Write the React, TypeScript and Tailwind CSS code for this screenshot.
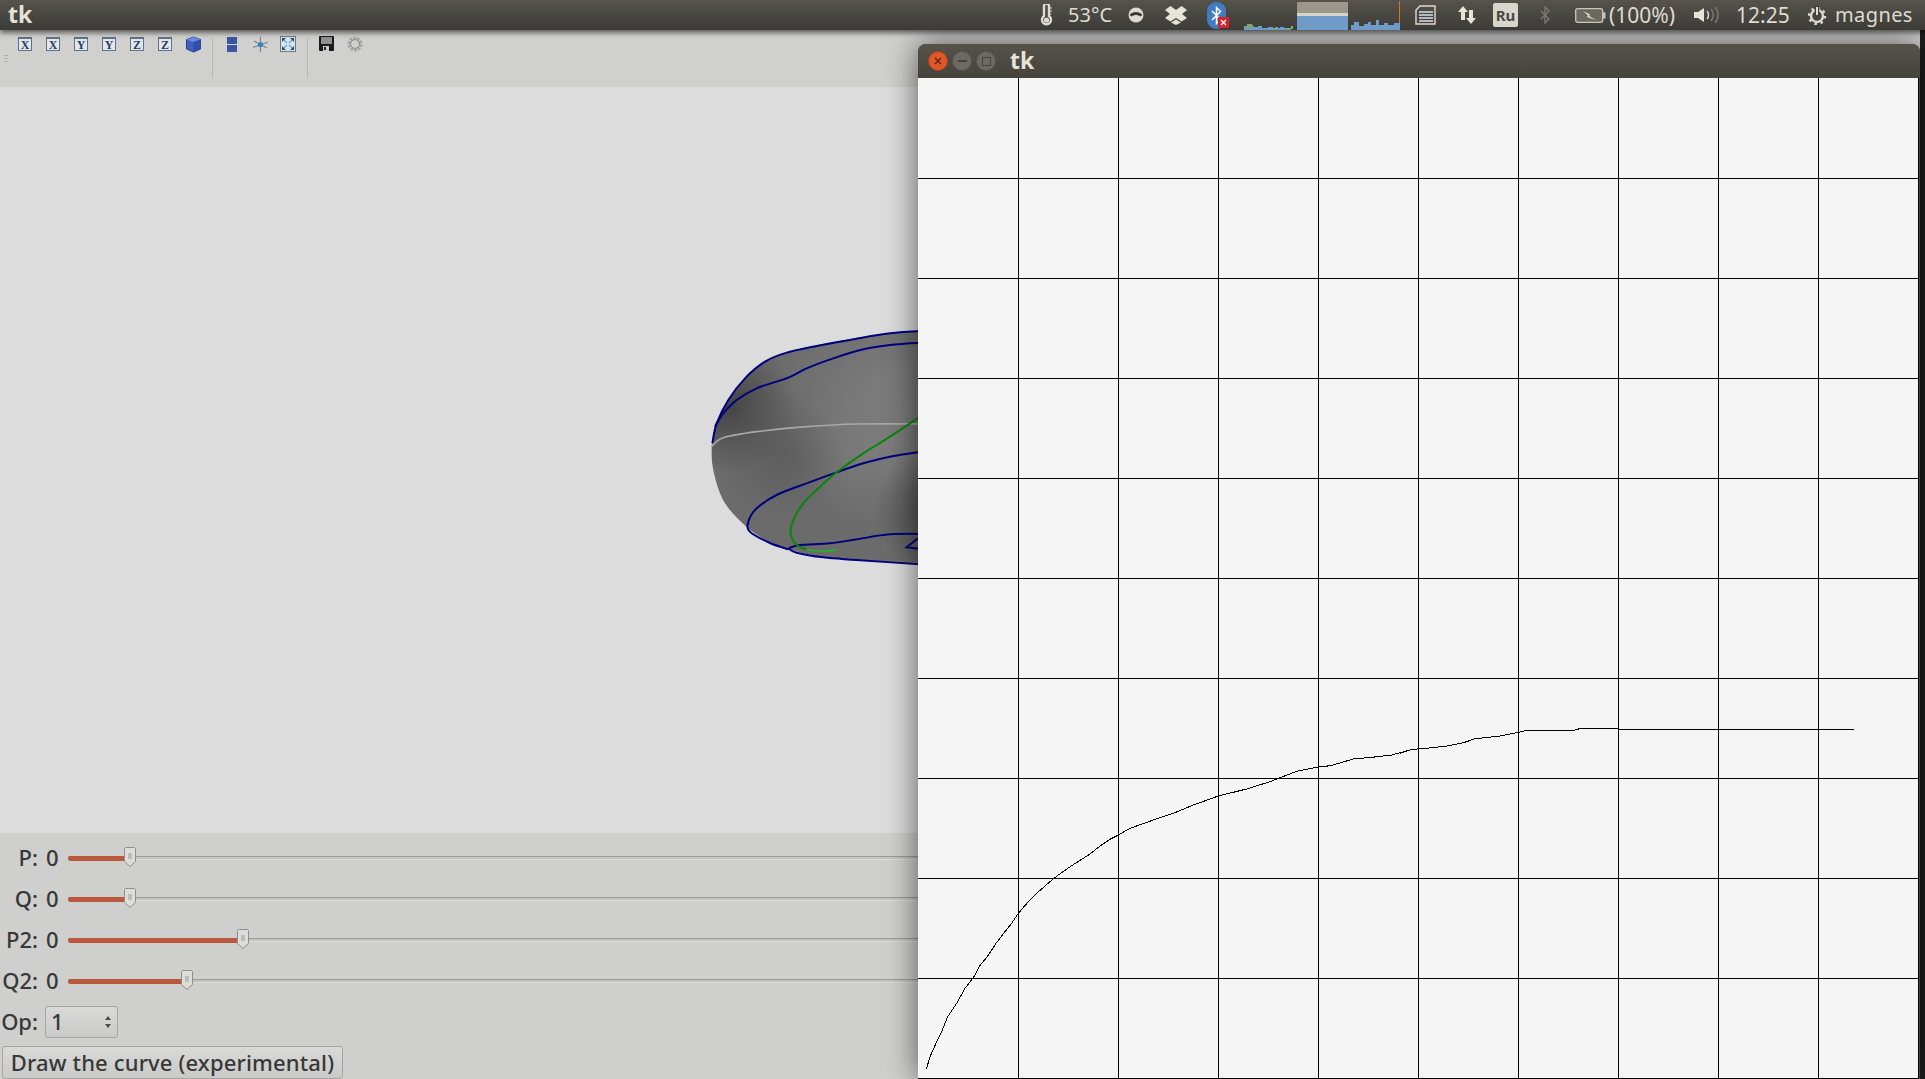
import React from 'react';

const uiFont = "font-['Noto_Sans',sans-serif]";

// curve traced off the canvas, in canvas pixels
const curveLeft = [
  [49, 1108], [60, 1070], [78, 1030], [97, 990], [113, 950], [140, 910], [165, 865], [192, 830],
  [207, 800], [232, 770], [258, 730], [281, 700], [305, 670], [325, 640], [355, 605], [380, 580],
  [420, 545], [445, 525], [485, 497], [540, 462], [570, 438], [600, 418], [625, 405], [660, 385],
  [730, 360], [790, 340], [850, 315], [925, 288], [1010, 267], [1080, 245], [1160, 214], [1225, 201],
  [1262, 197], [1330, 177], [1385, 172], [1445, 165], [1500, 150],
].map(([x, y]) => [x / 3 - 8, y / 3 + 622]);
const curveRight = [
  [0, 190], [35, 178], [70, 176], [140, 168], [190, 158], [225, 146], [300, 138], [353, 127],
  [380, 121], [520, 121], [540, 115], [648, 115], [652, 118], [1355, 118],
].map(([x, y]) => [x / 2.987 + 482, y / 3 + 612]);
const curve = [...curveLeft, ...curveRight].map((p) => p.join(',')).join(' ');

const gridX = [100, 200, 300, 400, 500, 600, 700, 800, 900];
const gridY = [100, 200, 300, 400, 500, 600, 700, 800, 900, 1000];

const sliders = [
  { label: 'P:', at: 62 },
  { label: 'Q:', at: 62 },
  { label: 'P2:', at: 175 },
  { label: 'Q2:', at: 119 },
];

// catmull-rom through the traced points so the torus doesn't look faceted
function smooth(pts: number[][]) {
  let d = `M${pts[0][0]} ${pts[0][1]}`;
  for (let i = 0; i < pts.length - 1; i++) {
    const p0 = pts[i - 1] || pts[i];
    const p1 = pts[i];
    const p2 = pts[i + 1];
    const p3 = pts[i + 2] || p2;
    const c1 = [p1[0] + (p2[0] - p0[0]) / 6, p1[1] + (p2[1] - p0[1]) / 6];
    const c2 = [p2[0] - (p3[0] - p1[0]) / 6, p2[1] - (p3[1] - p1[1]) / 6];
    d += `C${c1[0]} ${c1[1]} ${c2[0]} ${c2[1]} ${p2[0]} ${p2[1]}`;
  }
  return d;
}

const outline = smooth([
  [720, 62], [600, 70], [480, 88], [380, 106], [290, 128], [225, 155], [165, 205], [115, 270], [80, 340], [65, 410],
  [72, 490], [105, 580], [175, 655], [240, 697], [295, 718], [400, 742], [500, 750], [720, 765],
]);
const blueLines = [
  smooth([[720, 62], [600, 70], [480, 90], [380, 108], [290, 128], [225, 155], [165, 205], [115, 270], [80, 340], [67, 400]]),
  smooth([[720, 96], [600, 105], [520, 118], [430, 145], [350, 175], [295, 203], [200, 235], [140, 270], [100, 310], [75, 350]]),
  smooth([[720, 422], [600, 440], [520, 460], [440, 487], [350, 520], [260, 555], [200, 595], [175, 635], [180, 665], [240, 699], [295, 718]]),
  smooth([[720, 672], [600, 673], [500, 688], [420, 700], [330, 705], [295, 715]]),
  smooth([[295, 715], [320, 728], [400, 742], [500, 750], [720, 765]]),
];
const grayLine = smooth([[64, 410], [100, 383], [200, 365], [350, 350], [500, 342], [720, 342]]);
const greenLine = smooth([[720, 300], [600, 380], [520, 430], [440, 487], [380, 540], [340, 580], [310, 630], [302, 670], [320, 705], [350, 718]]);

function AxisIcon({ letter, className = '' }: { letter: string; className?: string }) {
  return (
    <div className={`w-[14px] h-[14px] border border-[#5f7186] border-t-[2px] bg-[#e4e7e8] flex items-center justify-center ${className}`}>
      <span className="font-['Liberation_Serif',serif] font-bold text-[12px] leading-none text-[#24406f]">{letter}</span>
    </div>
  );
}

function Toolbar() {
  return (
    <div className="relative h-[57px] bg-[#d0d0ce] flex items-start pt-[7px] shrink-0">
      <div className="absolute left-[4px] top-[25px] w-[4px] h-[7px] border-y border-[#b0b0ae]">
        <div className="h-px mt-[2px] bg-[#b0b0ae]" />
      </div>
      <AxisIcon letter="X" className="ml-[18px]" />
      <AxisIcon letter="X" className="ml-[14px]" />
      <AxisIcon letter="Y" className="ml-[14px]" />
      <AxisIcon letter="Y" className="ml-[14px]" />
      <AxisIcon letter="Z" className="ml-[14px]" />
      <AxisIcon letter="Z" className="ml-[14px]" />
      <svg className="ml-[13px] -mt-[1px]" width="17" height="17" viewBox="0 0 17 17">
        <path d="M8.5 1 15.5 3.5V13L8.5 16 1.5 13V3.5Z" fill="#3f5fc0" stroke="#27407f" />
        <path d="M1.5 3.5 8.5 6 15.5 3.5 8.5 1Z" fill="#6d8be0" />
        <path d="M8.5 6V16L15.5 13V3.5Z" fill="#3050a8" />
      </svg>
      <div className="ml-[10px] w-px h-[41px] bg-[#b8b8b6]" />
      <div className="ml-[14px] w-[10px] flex flex-col gap-[1px]">
        <div className="h-[7px] bg-[#3b55a0]" />
        <div className="h-[7px] bg-[#3b55a0]" />
      </div>
      <svg className="ml-[16px]" width="15" height="15" viewBox="0 0 15 15">
        <path d="M7.5 0V15M0 10.5 15 5M1 4 14 11" stroke="#85868a" strokeWidth="1.3" />
        <circle cx="7.5" cy="7.5" r="2.6" fill="#2f86cf" />
      </svg>
      <svg className="ml-[12px] -mt-[1px]" width="16" height="16" viewBox="0 0 16 16">
        <rect x="0.5" y="0.5" width="15" height="15" fill="#d6e4ee" stroke="#7b7560" />
        <path d="M2 2H6L2 6ZM14 2V6L10 2ZM2 14V10L6 14ZM14 14H10L14 10Z" fill="#1f4f86" />
        <path d="M4 4 7 7M12 4 9 7M4 12 7 9M12 12 9 9" stroke="#6fa6d2" strokeWidth="1.4" />
      </svg>
      <div className="ml-[11px] w-px h-[41px] bg-[#b8b8b6]" />
      <svg className="ml-[11px] -mt-[1px]" width="15" height="15" viewBox="0 0 15 15">
        <rect width="15" height="15" rx="1" fill="#1a1a1a" />
        <rect x="2" y="1" width="11" height="7" fill="#8f8f8f" />
        <rect x="4" y="10" width="6" height="5" fill="#c9c9c9" />
        <rect x="5" y="11" width="2" height="3" fill="#222" />
      </svg>
      <svg className="ml-[13px] -mt-[1px]" width="16" height="16" viewBox="0 0 16 16">
        <circle cx="8" cy="8" r="6" fill="none" stroke="#a6a6a6" strokeWidth="3" strokeDasharray="2.6 1.1" />
        <circle cx="8" cy="8" r="4.4" fill="none" stroke="#8a8a8a" strokeWidth="1" />
      </svg>
    </div>
  );
}

function Torus() {
  return (
    <svg className="absolute left-[690px] top-[223px]" width="240" height="270" viewBox="0 0 720 810">
      <defs>
        <clipPath id="torusClip">
          <path d={`${outline}Z`} />
        </clipPath>
        <radialGradient id="lightTop" cx="580" cy="230" r="340" gradientUnits="userSpaceOnUse">
          <stop offset="0" stopColor="#7a7a7a" />
          <stop offset="1" stopColor="#7a7a7a" stopOpacity="0" />
        </radialGradient>
        <radialGradient id="lightMid" cx="560" cy="400" r="260" gradientUnits="userSpaceOnUse">
          <stop offset="0" stopColor="#7c7c7c" />
          <stop offset="1" stopColor="#7c7c7c" stopOpacity="0" />
        </radialGradient>
        <radialGradient id="darkLeft" cx="120" cy="290" r="200" gradientUnits="userSpaceOnUse">
          <stop offset="0" stopColor="#404040" stopOpacity="0.9" />
          <stop offset="1" stopColor="#404040" stopOpacity="0" />
        </radialGradient>
        <radialGradient id="darkMid" cx="270" cy="430" r="190" gradientUnits="userSpaceOnUse">
          <stop offset="0" stopColor="#545454" stopOpacity="0.6" />
          <stop offset="1" stopColor="#545454" stopOpacity="0" />
        </radialGradient>
        <radialGradient id="darkRight" cx="720" cy="600" r="170" gradientUnits="userSpaceOnUse">
          <stop offset="0" stopColor="#4a4a4a" stopOpacity="0.8" />
          <stop offset="1" stopColor="#4a4a4a" stopOpacity="0" />
        </radialGradient>
      </defs>
      <g clipPath="url(#torusClip)">
        <rect width="720" height="810" fill="#6b6b6b" />
        <rect width="720" height="810" fill="url(#lightTop)" />
        <rect width="720" height="810" fill="url(#lightMid)" />
        <rect width="720" height="810" fill="url(#darkLeft)" />
        <rect width="720" height="810" fill="url(#darkMid)" />
        <rect width="720" height="810" fill="url(#darkRight)" />
      </g>
      <g fill="none" stroke="#00007f" strokeWidth="6">
        {blueLines.map((d) => (
          <path key={d} d={d} />
        ))}
        <path d="M684 685 650 712 720 720" />
      </g>
      <path d={grayLine} fill="none" stroke="#a8a8a8" strokeWidth="5" />
      <path d={greenLine} fill="none" stroke="#0a850a" strokeWidth="6" />
      <path d="M350 718C370 724 410 725 440 720" fill="none" stroke="#14c414" strokeWidth="4" />
    </svg>
  );
}

function SliderRow({ label, at }: { label: string; at: number }) {
  return (
    <div className="flex items-center h-[41px]">
      <span className="w-[38px] text-right -mt-[3px]">{label}</span>
      <span className="w-[30px] pl-[8px] -mt-[3px]">0</span>
      <div className="relative flex-1 h-[4px]">
        <div className="h-px bg-[#9c9c99] -mt-[1px]" />
        <div className="h-[3px] bg-[#c4c4c2] border-b border-[#dcdcda]" />
        <div className="absolute left-0 top-[-1px] h-[5px] rounded-full bg-[#b9583a]" style={{ width: at }} />
        <svg className="absolute top-[-10px]" style={{ left: at - 6 }} width="12" height="20" viewBox="0 0 12 20">
          <path d="M1.5.5H10.5L11.5 1.5V14.5L6 19.5.5 14.5V1.5Z" fill="#dcdcda" stroke="#8e8e8c" />
          <path d="M4 7H8M4 9H8M4 11H8" stroke="#9c9c9a" />
        </svg>
      </div>
    </div>
  );
}

function Controls() {
  return (
    <div className="h-[246px] bg-[#cfcfcd] pt-[5px] text-[22px] font-medium leading-none text-[#383838] shrink-0 overflow-hidden">
      {sliders.map((s) => (
        <SliderRow key={s.label} label={s.label} at={s.at} />
      ))}
      <div className="flex items-center h-[40px]">
        <span className="w-[38px] text-right -mt-[2px]">Op:</span>
        <div className="ml-[7px] w-[73px] h-[32px] border border-[#a5a5a3] rounded-[3px] bg-gradient-to-b from-[#d9d9d7] to-[#cacac8] flex items-center justify-between pl-[5px] pr-[6px]">
          <span className="-mt-[2px]">1</span>
          <svg width="6" height="14" viewBox="0 0 6 14">
            <path d="M3 1 6 5H0ZM3 13 0 9H6Z" fill="#4a4a4a" />
          </svg>
        </div>
      </div>
      <button className="ml-[2px] mt-[4px] w-[341px] h-[33px] pb-[2px] border border-[#a5a5a3] rounded-[3px] bg-gradient-to-b from-[#d9d9d7] to-[#cacac8] text-center whitespace-nowrap font-medium tracking-[0.15px]">
        Draw the curve (experimental)
      </button>
    </div>
  );
}

function PlotWindow() {
  return (
    <div className="absolute left-[918px] top-[44px] w-[1002px] h-[1035px] rounded-t-[8px] bg-[#46443d] shadow-[0_0_32px_rgba(0,0,0,0.6)] flex flex-col">
      <div className="relative h-[34px] shrink-0 rounded-t-[8px] bg-gradient-to-b from-[#55524a] to-[#45433c] flex items-center pl-[10px]">
        <div className="w-[20px] h-[20px] rounded-full bg-[#e2572a] border border-[#a8411d] flex items-center justify-center">
          <svg width="8" height="8" viewBox="0 0 8 8">
            <path d="M1 1 7 7M7 1 1 7" stroke="#5e2410" strokeWidth="1.4" />
          </svg>
        </div>
        <div className="ml-[4px] w-[20px] h-[20px] rounded-full bg-[#6c6a62] border border-[#55534c] flex items-center justify-center">
          <div className="w-[9px] h-[2px] bg-[#45433c]" />
        </div>
        <div className="ml-[4px] w-[20px] h-[20px] rounded-full bg-[#6c6a62] border border-[#55534c] flex items-center justify-center">
          <div className="w-[9px] h-[9px] border-[1.5px] border-[#45433c]" />
        </div>
        <span className={`ml-[14px] -mt-[2px] text-[23px] leading-none font-bold text-[#e6e2d8] ${uiFont}`}>tk</span>
      </div>
      <div className="flex-1 mr-[1px] bg-[#f5f5f5] border-r border-black min-h-0">
        <svg width="1000" height="1001" shapeRendering="crispEdges" className="block">
          {gridX.map((x) => (
            <line key={x} x1={x + 0.5} y1="0" x2={x + 0.5} y2="1001" stroke="#000" />
          ))}
          {gridY.map((y) => (
            <line key={y} x1="0" y1={y + 0.5} x2="1000" y2={y + 0.5} stroke="#000" />
          ))}
          <polyline points={curve} fill="none" stroke="#000" strokeWidth="1" />
        </svg>
      </div>
    </div>
  );
}

function SysMonitor() {
  return (
    <div className="ml-[18px] flex items-end gap-[2px] h-[29px] self-start mt-px">
      <svg width="51" height="29" viewBox="0 0 51 29" shapeRendering="crispEdges">
        <path d="M0 29V25H4V24H9V26H14V25H18V27H24V26H29V27H36V26H40V27H47V29Z" fill="#6f9bc9" />
        <path d="M0 25H3V23H8V25H10V27H3V25ZM28 27H31V26H34V28H28ZM42 27H47V25H49V28H42Z" fill="#7aa86a" />
      </svg>
      <div className="w-[51px] h-[28px] flex flex-col">
        <div className="h-[11px] bg-[#9b978c]" />
        <div className="h-[3px] bg-[#d8d5c8]" />
        <div className="flex-1 bg-[#6f9bc9]" />
      </div>
      <svg width="51" height="29" viewBox="0 0 51 29" shapeRendering="crispEdges">
        <path d="M1 29V24H4V21H9V25H14V23H18V21H21V24H26V19H29V24H34V22H38V24H44V22H49V19H50V29Z" fill="#6f9bc9" />
        <rect x="49" y="0" width="1" height="22" fill="#d47a1c" />
      </svg>
    </div>
  );
}

function TopBar() {
  return (
    <div className={`relative z-10 h-[30px] shrink-0 bg-gradient-to-b from-[#56534b] to-[#3c3b37] shadow-[0_3px_5px_rgba(0,0,0,0.55)] flex items-center text-[#dfdbd2] text-[20px] leading-none whitespace-nowrap ${uiFont}`}>
      <span className="ml-[8px] w-[30px] text-[23px] leading-[24px] -mt-[2px] font-bold text-[#e6e2d8]">tk</span>
      <svg className="ml-[1001px]" width="14" height="22" viewBox="0 0 14 22">
        <path d="M5 2a2.5 2.5 0 0 1 5 0V12a4.5 4.5 0 1 1-5 0Z" fill="none" stroke="#dfdbd2" strokeWidth="2.4" />
        <path d="M10 4h3M10 7h3M10 10h2" stroke="#dfdbd2" />
        <circle cx="7.5" cy="16" r="2.6" fill="#dfdbd2" />
      </svg>
      <span className="ml-[15px] w-[46px]">53°C</span>
      <svg className="ml-[14px]" width="16" height="16" viewBox="0 0 16 16">
        <circle cx="8" cy="8" r="7.5" fill="#dfdbd2" />
        <path d="M1.5 8C4 4 12 4 14.5 8L12 9.5C10 7.5 6 7.5 4 9.5Z" fill="#3c3b37" />
      </svg>
      <svg className="ml-[21px]" width="22" height="20" viewBox="0 0 22 20">
        <path d="M5.5 1 11 5 16.5 1 22 5 17 9 22 13 16.5 16.5 11 13 5.5 16.5 0 13 5 9 0 5ZM6 17.5 11 14.5 16 17.5 11 20Z" fill="#e7e3d9" />
      </svg>
      <div className="relative ml-[20px] w-[19px] h-[27px]">
        <div className="w-[19px] h-[27px] rounded-[9px] bg-[#3f7cc4] flex items-center justify-center">
          <svg width="11" height="19" viewBox="0 0 11 19">
            <path d="M1 5 9.5 13.5 5.5 17.5V1.5L9.5 5.5 1 14" fill="none" stroke="#fff" strokeWidth="1.5" />
          </svg>
        </div>
        <div className="absolute left-[11px] top-[15px] w-[11px] h-[11px] rounded-[1px] bg-[#d8202e] flex items-center justify-center">
          <svg width="7" height="7" viewBox="0 0 7 7">
            <path d="M1 1 6 6M6 1 1 6" stroke="#fff" strokeWidth="1.4" />
          </svg>
        </div>
      </div>
      <SysMonitor />
      <svg className="ml-[14px]" width="21" height="20" viewBox="0 0 21 20">
        <path d="M1 5 5 1H20V19H1Z" fill="none" stroke="#dfdbd2" strokeWidth="1.4" />
        <path d="M4 7H18M4 10H18M4 13H18M4 16H18" stroke="#d6e2ea" strokeWidth="1.6" />
      </svg>
      <svg className="ml-[21px]" width="20" height="20" viewBox="0 0 20 20">
        <path d="M6 1 11 7H8V15H4V7H1ZM14 19 9 13H12V5H16V13H19Z" fill="#e7e3d9" />
      </svg>
      <div className="ml-[16px] w-[25px] h-[24px] rounded-[2px] bg-[#d8d5cd] flex items-center justify-center text-[15px] font-bold text-[#4a4842]">Ru</div>
      <svg className="ml-[22px]" width="10" height="18" viewBox="0 0 10 18">
        <path d="M1 5 9 13 5 17V1L9 5 1 13" fill="none" stroke="#7b7970" strokeWidth="1.3" />
      </svg>
      <svg className="ml-[25px]" width="31" height="15" viewBox="0 0 31 15">
        <rect x="0.7" y="0.7" width="27" height="13.6" rx="2" fill="#6a685f" stroke="#c9c6bc" strokeWidth="1.3" />
        <rect x="28" y="4.5" width="2.5" height="6" fill="#c9c6bc" />
        <path d="M8 3 15 6.5 14 8 21 12 12 9 13 7.5Z" fill="#e7e3d9" />
      </svg>
      <span className="ml-[3px] w-[70px] text-[21px]">(100%)</span>
      <svg className="ml-[15px]" width="26" height="18" viewBox="0 0 26 18">
        <path d="M0 6H4L10 2V16L4 12H0Z" fill="#e7e3d9" />
        <path d="M13 5C15 7 15 11 13 13" fill="none" stroke="#dfdbd2" strokeWidth="1.4" />
        <path d="M17 3C20 6 20 12 17 15M21 1C25 5 25 13 21 17" fill="none" stroke="#7b7970" strokeWidth="1.4" />
      </svg>
      <span className="ml-[16px] w-[55px] text-[21px]">12:25</span>
      <svg className="ml-[16px]" width="20" height="20" viewBox="0 0 20 20">
        <circle cx="10" cy="11" r="6" fill="none" stroke="#dfdbd2" strokeWidth="2.4" />
        <circle cx="10" cy="11" r="8" fill="none" stroke="#dfdbd2" strokeWidth="2.4" strokeDasharray="2.5 3.8" />
        <path d="M10 1V10" stroke="#3c3b37" strokeWidth="4.5" />
        <path d="M10 2V10" stroke="#dfdbd2" strokeWidth="2" />
      </svg>
      <span className="ml-[8px] tracking-[0.4px]">magnes</span>
    </div>
  );
}

export default function App() {
  return (
    <div className={`relative w-[1925px] h-[1079px] overflow-hidden flex flex-col bg-[#dcdcdc] ${uiFont}`}>
      <TopBar />
      <div className="flex-1 min-h-0 flex">
        <div className="flex-1 min-w-0 flex flex-col">
          <Toolbar />
          <div className="relative flex-1 min-h-0 bg-[#dcdcdc] overflow-hidden">
            <Torus />
          </div>
          <Controls />
        </div>
        <div className="w-[5px] bg-[#1e1e1e] shrink-0" />
      </div>
      <PlotWindow />
    </div>
  );
}
